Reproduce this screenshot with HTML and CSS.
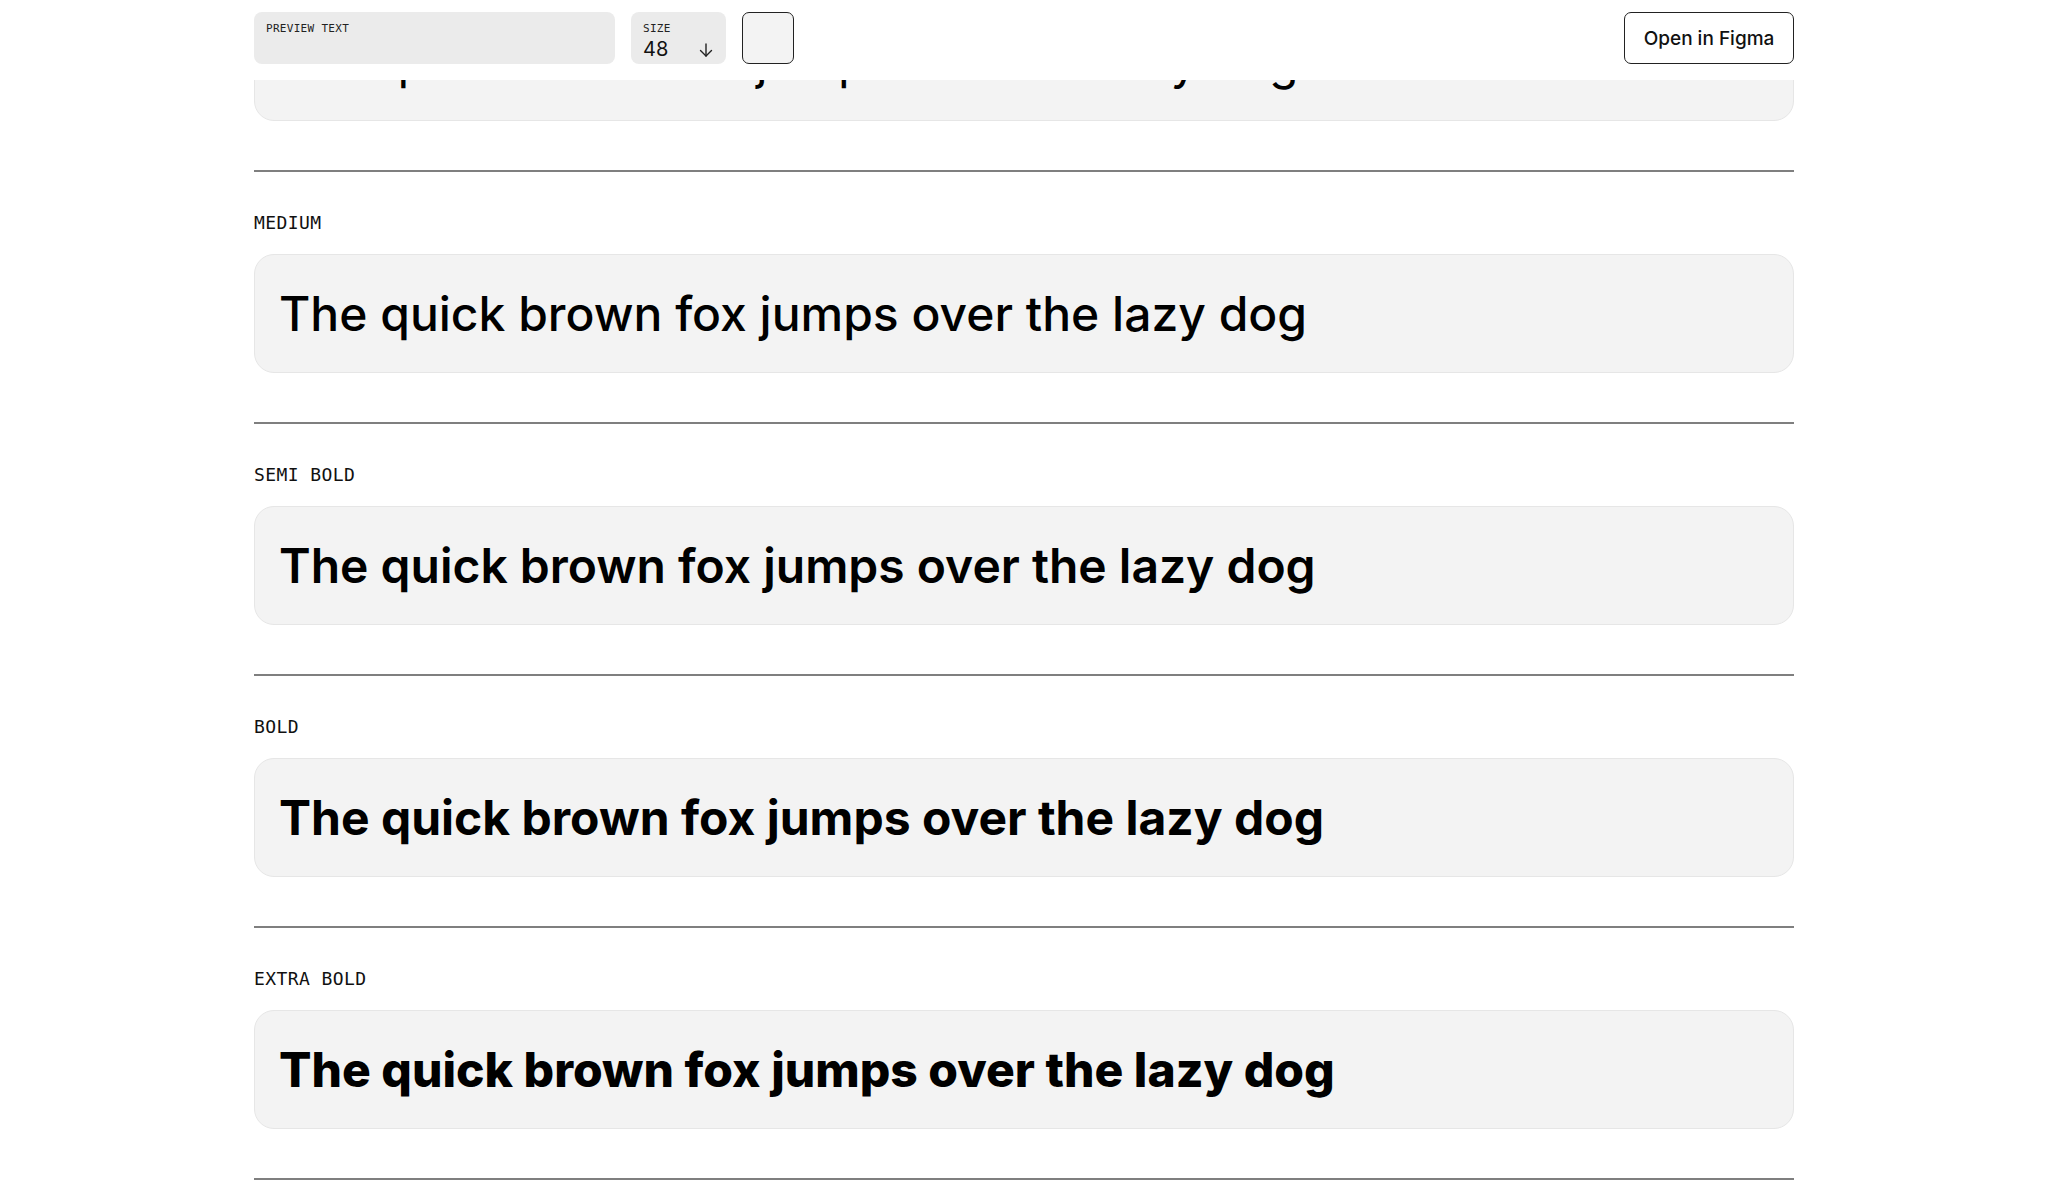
FILE: index.html
```html
<!DOCTYPE html>
<html lang="en">
<head>
    <meta charset="UTF-8">
    <meta name="viewport" content="width=device-width, initial-scale=1.0">
    <title>Inter - Weights</title>
    <link rel="stylesheet" href="styles.css">
</head>
<body>
    <header class="toolbar">
        <div class="toolbar-inner">
            <div class="controls">
                <label class="field field-text">
                    <span class="field-label">PREVIEW TEXT</span>
                    <input type="text" class="field-input" value="">
                </label>
                <label class="field field-size">
                    <span class="field-label">SIZE</span>
                    <span class="size-row">
                        <span class="size-value">48</span>
                        <svg class="size-arrow" width="16" height="14" viewBox="0 0 16 14" fill="none" stroke="#222" stroke-width="1.4" stroke-linecap="round" stroke-linejoin="round">
                            <path d="M8 1v12"/>
                            <path d="M2.5 7.5L8 13l5.5-5.5"/>
                        </svg>
                    </span>
                </label>
                <div class="swatch"></div>
            </div>
            <a class="button" href="#">Open in Figma</a>
        </div>
    </header>

    <main class="weights">
        <section class="weight">
            <div class="weight-name">REGULAR</div>
            <div class="sample w-400">The quick brown fox jumps over the lazy dog</div>
        </section>
        <section class="weight">
            <div class="weight-name">MEDIUM</div>
            <div class="sample w-500">The quick brown fox jumps over the lazy dog</div>
        </section>
        <section class="weight">
            <div class="weight-name">SEMI BOLD</div>
            <div class="sample w-600">The quick brown fox jumps over the lazy dog</div>
        </section>
        <section class="weight">
            <div class="weight-name">BOLD</div>
            <div class="sample w-700">The quick brown fox jumps over the lazy dog</div>
        </section>
        <section class="weight">
            <div class="weight-name">EXTRA BOLD</div>
            <div class="sample w-800">The quick brown fox jumps over the lazy dog</div>
        </section>
        <section class="weight">
            <div class="weight-name">BLACK</div>
            <div class="sample w-900">The quick brown fox jumps over the lazy dog</div>
        </section>
    </main>
</body>
</html>
```

FILE: styles.css
```css
body {
    margin: 0;
    background-color: #fff;
    color: #111;
    font-family: Inter, "Noto Sans", sans-serif;
}

/* top bar stays over the scrolled list */
.toolbar {
    position: fixed;
    top: 0;
    left: 0;
    right: 0;
    height: 80px;
    background-color: #fff;
    z-index: 10;
}
.toolbar-inner {
    width: 1540px;
    margin: 0 auto;
    padding-top: 12px;
    display: flex;
    justify-content: space-between;
    align-items: flex-start;
}
.controls {
    display: flex;
    gap: 16px;
}
.field {
    display: flex;
    flex-direction: column;
    height: 52px;
    box-sizing: border-box;
    padding: 10px 12px 0;
    background-color: #ebebeb;
    border-radius: 8px;
}
.field-text {
    width: 361px;
}
.field-size {
    width: 95px;
}
.field-label {
    display: block;
    font-family: "DejaVu Sans Mono", monospace;
    font-size: 11px;
    line-height: 14px;
    color: #222;
    letter-spacing: 0.3px;
}
.field-input {
    height: 20px;
    margin-top: 2px;
    border: none;
    outline: none;
    background: transparent;
    padding: 0;
    font-family: Inter, sans-serif;
    font-size: 16px;
}
.size-row {
    display: flex;
    align-items: center;
    justify-content: space-between;
    margin-top: 2px;
}
.size-value {
    font-size: 20px;
    line-height: 22px;
    color: #111;
}
.size-arrow {
    margin-top: 1px;
}
.swatch {
    width: 52px;
    height: 52px;
    box-sizing: border-box;
    border: 1.5px solid #222;
    border-radius: 7px;
    background-color: #f3f3f3;
}
.button {
    display: inline-flex;
    align-items: center;
    justify-content: center;
    width: 170px;
    height: 52px;
    box-sizing: border-box;
    border: 1.5px solid #222;
    border-radius: 7px;
    color: #111;
    text-decoration: none;
    font-size: 19px;
    font-weight: 500;
}

/* weight list */
.weights {
    width: 1540px;
    margin: -82px auto 0;
}
.weight {
    border-top: 2px solid #7f7f7f;
    padding: 39px 0 49px;
}
.weight-name {
    font-family: "DejaVu Sans Mono", monospace;
    font-size: 18px;
    line-height: 24px;
    letter-spacing: 0.4px;
    margin-bottom: 19px;
}
.sample {
    height: 119px;
    box-sizing: border-box;
    padding: 0 24px;
    display: flex;
    align-items: center;
    background-color: #f3f3f3;
    border: 1px solid #e6e6e6;
    border-radius: 20px;
    color: #000;
    font-size: 48px;
    white-space: nowrap;
    overflow: hidden;
}
.w-400 { font-weight: 400; }
.w-500 { font-weight: 500; }
.w-600 { font-weight: 600; }
.w-700 { font-weight: 700; }
.w-800 { font-weight: 800; }
.w-900 { font-weight: 900; }
```
